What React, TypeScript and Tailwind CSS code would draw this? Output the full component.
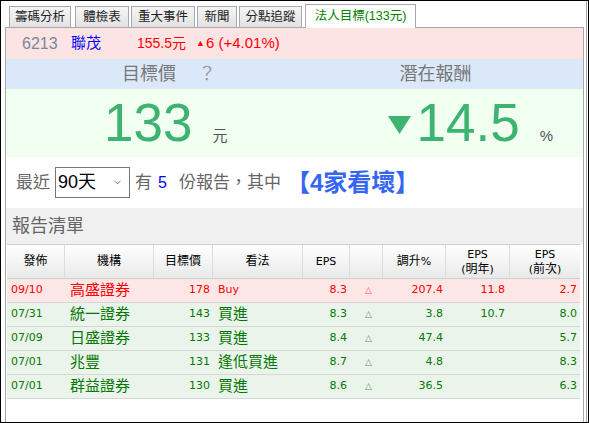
import { ChevronDown } from "lucide-react";

const cjk = "font-['Liberation_Sans','Noto_Sans_CJK_TC',sans-serif]";
const num = "font-['DejaVu_Sans','Noto_Sans_CJK_TC',sans-serif]";

const tabs = [
  { label: "籌碼分析", w: "w-[62px]" },
  { label: "體檢表", w: "w-[54px]" },
  { label: "重大事件", w: "w-[64px]" },
  { label: "新聞", w: "w-[40px]" },
  { label: "分點追蹤", w: "w-[63px]" },
];

const cols = "grid grid-cols-[58px_89px_59px_90px_47px_33px_63px_64px_70px]";

type Report = {
  date: string;
  broker: string;
  target: string;
  view: string;
  eps: string;
  change: string;
  epsNext: string;
  epsPrev: string;
  hot?: boolean;
};

const reports: Report[] = [
  { date: "09/10", broker: "高盛證券", target: "178", view: "Buy", eps: "8.3", change: "207.4", epsNext: "11.8", epsPrev: "2.7", hot: true },
  { date: "07/31", broker: "統一證券", target: "143", view: "買進", eps: "8.3", change: "3.8", epsNext: "10.7", epsPrev: "8.0" },
  { date: "07/09", broker: "日盛證券", target: "133", view: "買進", eps: "8.4", change: "47.4", epsNext: "", epsPrev: "5.7" },
  { date: "07/01", broker: "兆豐", target: "131", view: "逢低買進", eps: "8.7", change: "4.8", epsNext: "", epsPrev: "8.3" },
  { date: "07/01", broker: "群益證券", target: "130", view: "買進", eps: "8.6", change: "36.5", epsNext: "", epsPrev: "6.3" },
];

function HeaderCell({ children, last }: { children: React.ReactNode; last?: boolean }) {
  return (
    <div
      className={`flex flex-col items-center justify-center text-[12px] leading-[15px] text-black ${
        last ? "" : "border-r border-[#dcdcdc]"
      }`}
    >
      {children}
    </div>
  );
}

function ReportRow({ r }: { r: Report }) {
  const color = r.hot ? "text-[#ff0000]" : "text-[#067806]";
  const tri = r.hot ? "text-[#ff5a5a]" : "text-[#5a9a5a]";
  return (
    <div
      className={`${cols} h-[24px] border-b border-[#d6d6d6] ${
        r.hot ? "bg-[#fde6e6]" : "bg-[#eaf4ea]"
      } ${color}`}
    >
      <div className={`${num} flex items-center pl-[4px] text-[11px]`}>{r.date}</div>
      <div className={`${cjk} flex items-center pl-[5px] text-[15px]`}>{r.broker}</div>
      <div className={`${num} flex items-center justify-end pr-[3px] text-[11px]`}>{r.target}</div>
      <div
        className={`${r.hot ? num + " text-[11px]" : cjk + " text-[15px]"} flex items-center pl-[5px]`}
      >
        {r.view}
      </div>
      <div className={`${num} flex items-center justify-end pr-[3px] text-[11px]`}>{r.eps}</div>
      <div className={`${num} flex items-center justify-center pl-[4px] text-[9px] ${tri}`}>△</div>
      <div className={`${num} flex items-center justify-end pr-[3px] text-[11px]`}>{r.change}</div>
      <div className={`${num} flex items-center justify-end pr-[5px] text-[11px]`}>{r.epsNext}</div>
      <div className={`${num} flex items-center justify-end pr-[3px] text-[11px]`}>{r.epsPrev}</div>
    </div>
  );
}

export default function App() {
  return (
    <div className={`${cjk} flex h-[423px] w-[589px] overflow-hidden border border-black bg-white`}>
      <div className="flex w-[585px] flex-col pl-[4px] pt-[2px]">
        {/* Tabs */}
        <div className="flex h-[24px] items-end gap-[2px] pl-[4px]">
          {tabs.map((t, i) => (
            <div
              key={t.label}
              className={`${t.w} ${
                i === 1 ? "ml-[2px]" : ""
              } flex h-[21px] items-center justify-center border-x border-t border-[#a8a8a8] bg-gradient-to-b from-[#f6f6f6] to-[#e2e2e2] text-[12.5px] text-[#222]`}
            >
              {t.label}
            </div>
          ))}
          <div className="relative z-10 -mb-px ml-[1px] flex h-[24px] w-[111px] items-center justify-center border-x border-t border-[#a8a8a8] bg-white text-[12.5px] text-[#008000]">
            法人目標(133元)
          </div>
        </div>

        {/* Panel */}
        <div className="flex w-[579px] flex-1 flex-col border-x border-t border-[#a8a8a8]">
          {/* Stock line */}
          <div className="flex h-[31px] items-center bg-[#fde4e4] pl-[16px] text-[15px]">
            <span className="w-[49px] text-[16px] text-[#778899]">6213</span>
            <span className="w-[66px] text-[#0000ff]">聯茂</span>
            <span className="w-[59px] text-[14px] text-[#ff0000]">155.5元</span>
            <span className="flex items-center text-[#ff0000]">
              <span className="mr-[1px] text-[9px]">▲</span>6 (+4.01%)
            </span>
          </div>

          {/* Labels */}
          <div className="grid h-[30px] grid-cols-2 bg-[#dbe8f9] text-[18px] text-[#777]">
            <div className="flex items-center pl-[116px]">
              <span>目標價</span>
              <span className="ml-[22px] text-[#9a9a9a]">？</span>
            </div>
            <div className="flex items-center pl-[105px]">潛在報酬</div>
          </div>

          {/* Values */}
          <div className="grid h-[68px] grid-cols-2 bg-[#f0fff0] text-[#3cb371]">
            <div className="flex items-baseline pl-[98px] pt-[2px]">
              <span className="text-[53px] leading-[64px]">133</span>
              <span className="ml-[20px] text-[15px] text-[#555]">元</span>
            </div>
            <div className="flex items-baseline pl-[93px] pt-[2px]">
              <svg width="23" height="18" viewBox="0 0 23 18" className="mr-[6px] mt-[2px] self-center">
                <polygon points="0,0 23,0 11.5,18" fill="#3cb371" />
              </svg>
              <span className="text-[53px] leading-[64px]">14.5</span>
              <span className="ml-[20px] text-[15px] text-[#555]">%</span>
            </div>
          </div>

          {/* Period selector */}
          <div className="flex h-[51px] items-center pl-[10px] text-[17px] text-[#666]">
            <span>最近</span>
            <div className="ml-[5px] flex h-[31px] w-[75px] items-center justify-between border border-[#767676] bg-white pl-[2px] pr-[6px] text-[18px] text-black">
              <span>90天</span>
              <ChevronDown size={11} strokeWidth={1.5} className="text-[#444]" />
            </div>
            <span className="ml-[5px]">有</span>
            <span className="ml-[6px] text-[16px] text-[#0000ff]">5</span>
            <span className="ml-[12px]">份報告，其中</span>
            <span className="ml-[5px] text-[24px] font-bold text-[#3565f3]">【4家看壞】</span>
          </div>

          {/* Report list */}
          <div className="flex h-[36px] items-center bg-[#f0f0f0] pl-[6px] text-[18px] text-[#666]">
            報告清單
          </div>

          <div className="ml-px w-[573px]">
            <div
              className={`${cols} h-[35px] border-t border-b border-[#cfcfcf] bg-gradient-to-b from-white to-[#e9e9e9]`}
            >
              <HeaderCell>發佈</HeaderCell>
              <HeaderCell>機構</HeaderCell>
              <HeaderCell>目標價</HeaderCell>
              <HeaderCell>看法</HeaderCell>
              <HeaderCell>
                <span className={`${num} text-[11px]`}>EPS</span>
              </HeaderCell>
              <HeaderCell>{""}</HeaderCell>
              <HeaderCell>
                <span>
                  調升<span className={`${num} text-[11px]`}>%</span>
                </span>
              </HeaderCell>
              <HeaderCell>
                <span className={`${num} text-[11px]`}>EPS</span>
                <span>
                  <span className={`${num} text-[11px]`}>(</span>明年<span className={`${num} text-[11px]`}>)</span>
                </span>
              </HeaderCell>
              <HeaderCell last>
                <span className={`${num} text-[11px]`}>EPS</span>
                <span>
                  <span className={`${num} text-[11px]`}>(</span>前次<span className={`${num} text-[11px]`}>)</span>
                </span>
              </HeaderCell>
            </div>
            {reports.map((r, i) => (
              <ReportRow key={i} r={r} />
            ))}
          </div>
        </div>
      </div>
      <div className="w-px bg-[#a8a8a8]" />
      <div className="w-px bg-white" />
    </div>
  );
}
